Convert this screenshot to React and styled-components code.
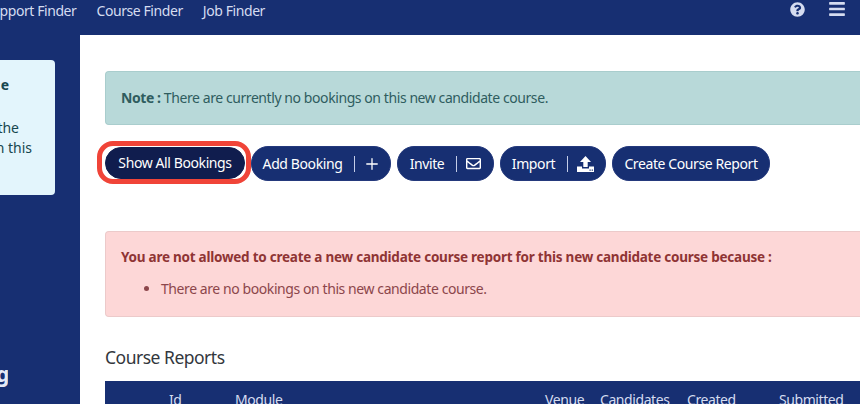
import React from "react";
import styled, { createGlobalStyle } from "styled-components";
import { FaQuestionCircle, FaBars, FaRegEnvelope } from "react-icons/fa";
import { Plus } from "lucide-react";

const navy = "#172f72";

const Global = createGlobalStyle`
  html, body { margin: 0; padding: 0; width: 860px; height: 404px; overflow: hidden; background: ${navy}; }
  * { box-sizing: border-box; }
  body { font-family: "Noto Sans", sans-serif; font-size: 14px; }
`;

const Page = styled.div`
  width: 860px;
  height: 404px;
  display: flex;
  flex-direction: column;
  overflow: hidden;
`;

const TopBar = styled.header`
  height: 35px;
  flex: none;
  display: flex;
  align-items: flex-start;
  justify-content: space-between;
  background: ${navy};
  color: #d5dcf0;
  overflow: hidden;
`;

const Nav = styled.nav`
  display: flex;
  gap: 20px;
  margin-left: -16px;
  padding-top: 1px;
  line-height: 19px;
  font-size: 14px;
  letter-spacing: -0.42px;
`;

const NavLink = styled.span`
  white-space: nowrap;
`;

const TopIcons = styled.div`
  display: flex;
  align-items: center;
  gap: 23px;
  height: 18px;
  padding-right: 14px;
  color: #d5dcf0;
`;

const Body = styled.div`
  flex: 1;
  display: flex;
  min-height: 0;
`;

const Sidebar = styled.aside`
  width: 80px;
  flex: none;
  display: flex;
  flex-direction: column;
  padding: 25px 25px 0 0;
  background: ${navy};
`;

const InfoCard = styled.div`
  height: 135px;
  display: flex;
  flex-direction: column;
  align-items: flex-end;
  padding: 15px 46px 0 0;
  background: #e3f5fc;
  border-radius: 0 4px 4px 0;
  color: #17474f;
`;

const InfoLine = styled.div`
  line-height: 20px;
  font-weight: ${(p) => (p.$bold ? 700 : 400)};
  margin-top: ${(p) => p.$top || 0}px;
  margin-right: ${(p) => p.$shift || 0}px;
  white-space: nowrap;
`;

const SideTitle = styled.div`
  margin-top: auto;
  padding: 0 0 17px 0;
  margin-left: -4px;
  width: 12px;
  overflow: hidden;
  text-align: right;
  color: #e4e9f7;
  font-size: 21px;
  font-weight: 700;
  line-height: 26px;
`;

const Main = styled.main`
  flex: 1;
  min-width: 0;
  padding: 36px 0 0 25px;
  background: #fff;
  overflow: hidden;
`;

const Alert = styled.div`
  border: 1px solid ${(p) => p.$border};
  border-right: 0;
  border-radius: 4px 0 0 4px;
  background: ${(p) => p.$bg};
  color: ${(p) => p.$color};
  padding: 16px 15px;
  line-height: 20px;
  letter-spacing: -0.42px;
  white-space: nowrap;
`;

const Strong = styled.strong`
  font-weight: 700;
`;

const Toolbar = styled.div`
  display: flex;
  align-items: center;
  gap: 6px;
  height: 35px;
  margin-top: 21px;
`;

const Pill = styled.button`
  position: relative;
  height: ${(p) => (p.$active ? 32 : 35)}px;
  width: ${(p) => p.$w}px;
  margin-bottom: ${(p) => (p.$active ? 2 : 0)}px;
  display: flex;
  align-items: center;
  justify-content: center;
  padding: 0 0 0 ${(p) => p.$pl || 0}px;
  border: 1px solid ${(p) => (p.$active ? "#101d4e" : "#24397c")};
  border-radius: 17px;
  background: ${(p) => (p.$active ? "#101d4e" : navy)};
  color: #fff;
  font-family: inherit;
  font-size: 14px;
  letter-spacing: -0.4px;
  white-space: nowrap;
  ${(p) =>
    p.$active &&
    `&::after {
      content: "";
      position: absolute;
      inset: -7px -7px -6px -9px;
      border: 5px solid #f04438;
      border-radius: 16px;
    }`}
`;

const Divider = styled.span`
  width: 1px;
  height: 16px;
  margin: 0 ${(p) => p.$gap || 9}px 0 12px;
  background: #c4cde8;
`;

const DangerAlert = styled(Alert)`
  margin-top: 50px;
  height: 86px;
  padding: 15px 15px;
`;

const DangerTitle = styled.div`
  font-weight: 700;
  font-size: 13.5px;
  letter-spacing: -0.24px;
`;

const DangerList = styled.ul`
  margin: 12px 0 0;
  padding-left: 40px;
  color: #8c464b;
`;

const Heading = styled.h2`
  margin: 28px 0 0;
  font-size: 17.5px;
  font-weight: 400;
  line-height: 24px;
  letter-spacing: -0.5px;
  color: #33373d;
`;

const TableHead = styled.div`
  display: grid;
  grid-template-columns: 64px 66px 310px 55px 87px 92px 1fr;
  margin-top: 12px;
  height: 40px;
  padding-top: 9px;
  background: ${navy};
  color: #d5dcf0;
  line-height: 20px;
  letter-spacing: -0.42px;
`;

const HeadCell = styled.span`
  white-space: nowrap;
`;

const UploadIcon = () => (
  <svg width="17" height="16" viewBox="0 0 17 16" fill="currentColor">
    <path d="M8.5 0 L14 6 H10.7 V11 H6.3 V6 H3 Z" />
    <path
      fillRule="evenodd"
      d="M0 10.5 H5 V12.5 H12 V10.5 H17 V16 H0 Z M12.5 13.5 V14.7 H13.7 V13.5 Z M14.7 13.5 V14.7 H15.9 V13.5 Z"
    />
  </svg>
);

const columns = ["", "Id", "Module", "Venue", "Candidates", "Created", "Submitted"];

export default function App() {
  return (
    <Page>
      <Global />
      <TopBar>
        <Nav>
          <NavLink>Support Finder</NavLink>
          <NavLink>Course Finder</NavLink>
          <NavLink>Job Finder</NavLink>
        </Nav>
        <TopIcons>
          <FaQuestionCircle size={15} />
          <FaBars size={18} />
        </TopIcons>
      </TopBar>
      <Body>
        <Sidebar>
          <InfoCard>
            <InfoLine $bold>e</InfoLine>
            <InfoLine $top={23} $shift={-10}>the</InfoLine>
            <InfoLine $shift={-23}>n this</InfoLine>
          </InfoCard>
          <SideTitle>g</SideTitle>
        </Sidebar>
        <Main>
          <Alert $bg="#b8d9d9" $border="#a9cdcd" $color="#2f5d5f">
            <Strong>Note :</Strong> There are currently no bookings on this new candidate course.
          </Alert>
          <Toolbar>
            <Pill $active $w={140}>Show All Bookings</Pill>
            <Pill $w={140} $pl={2}>
              Add Booking
              <Divider $gap={8} />
              <Plus size={18} strokeWidth={1.7} />
            </Pill>
            <Pill $w={97}>
              Invite
              <Divider />
              <FaRegEnvelope size={15} />
            </Pill>
            <Pill $w={106}>
              Import
              <Divider />
              <UploadIcon />
            </Pill>
            <Pill $w={158}>Create Course Report</Pill>
          </Toolbar>
          <DangerAlert $bg="#fdd7d7" $border="#eccaca" $color="#8f3434">
            <DangerTitle>
              You are not allowed to create a new candidate course report for this new candidate course because :
            </DangerTitle>
            <DangerList>
              <li>There are no bookings on this new candidate course.</li>
            </DangerList>
          </DangerAlert>
          <Heading>Course Reports</Heading>
          <TableHead>
            {columns.map((label, i) => (
              <HeadCell key={i}>{label}</HeadCell>
            ))}
          </TableHead>
        </Main>
      </Body>
    </Page>
  );
}
